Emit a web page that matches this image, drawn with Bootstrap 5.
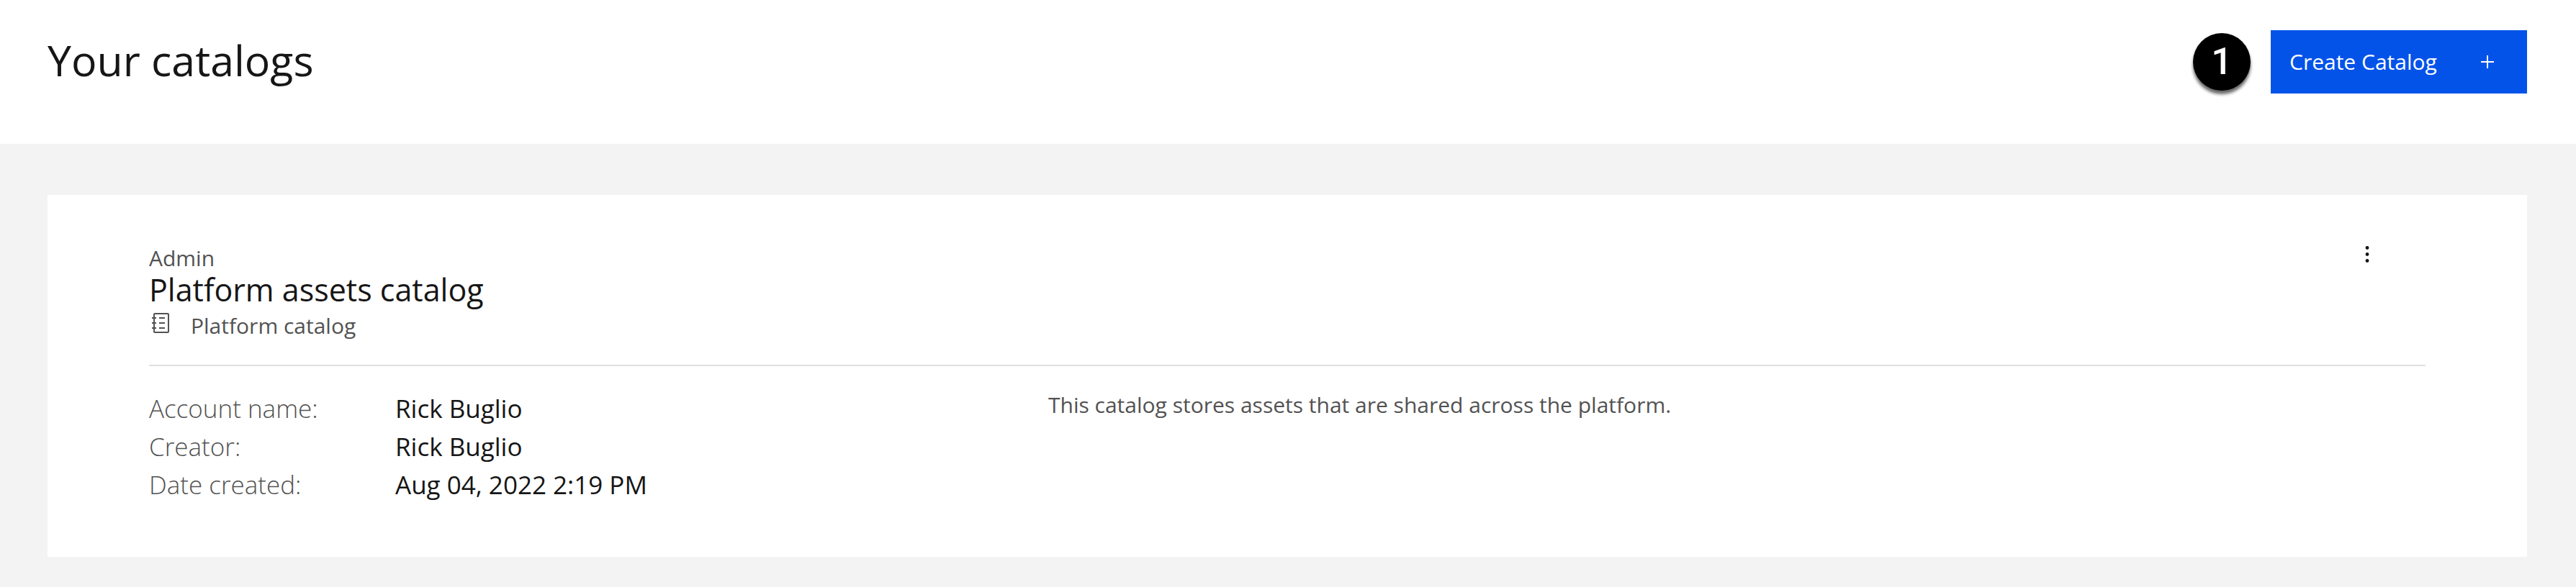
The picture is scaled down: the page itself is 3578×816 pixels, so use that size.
<!DOCTYPE html>
<html lang="en">
<head>
<meta charset="utf-8">
<meta name="viewport" content="width=device-width, initial-scale=1">
<title>Your catalogs</title>
<link href="https://cdn.jsdelivr.net/npm/bootstrap@5.3.0/dist/css/bootstrap.min.css" rel="stylesheet">
<style>
  body { font-family: "Open Sans", "Noto Sans", sans-serif; background: #f3f3f3; color: #161616; }
  .page-head { padding: 42px 68px 70px 66px; }
  .page-title { font-size: 59px; line-height: 82px; }
  .step-marker { width: 80px; height: 80px; border-radius: 50%; background: #000; color: #fff; font: 500 52px/80px Roboto, sans-serif; box-shadow: 0 5px 4px rgba(0, 0, 0, .6); }
  .btn-create { --bs-btn-color: #fff; --bs-btn-bg: #0353e9; --bs-btn-border-color: #0353e9; --bs-btn-hover-color: #fff; --bs-btn-hover-bg: #0043ce; --bs-btn-border-width: 0; width: 356px; height: 88px; padding: 0 46px 0 26px; font-size: 30px; line-height: 44px; }
  .page-body { padding: 71px 68px 42px 66px; }
  .catalog-card { padding: 66px 141px 74px; }
  .role-text, .kind-text, .about-text { font-size: 30px; line-height: 44px; color: #525252; }
  .catalog-name { font-size: 43px; line-height: 44px; }
  .kind-row { margin-top: 6px; }
  .kind-icon { margin: 0 28px 8px 4px; }
  .btn-more { margin-right: 69px; }
  .rule { border-top: 2px solid #e0e0e0; margin-top: 32px; padding-top: 32px; }
  .facts { font-size: 35px; line-height: 53px; flex: 0 0 39.5%; display: grid; grid-template-columns: 342px 1fr; align-content: start; }
  .facts dt { font-weight: 300; color: #525252; }
</style>
</head>
<body>
<header class="page-head bg-white d-flex justify-content-between align-items-start">
  <h1 class="page-title fw-normal mb-0">Your catalogs</h1>
  <div class="d-flex align-items-center gap-4">
    <span class="step-marker text-center me-1">1</span>
    <button type="button" class="btn btn-create rounded-0 d-flex align-items-center justify-content-between">
      Create Catalog
      <svg width="18" height="18" viewBox="0 0 18 18" fill="none" stroke="currentColor" stroke-width="2" aria-hidden="true"><path d="M9 0v18M0 9h18"/></svg>
    </button>
  </div>
</header>
<main class="page-body">
  <article class="catalog-card bg-white">
    <div class="d-flex justify-content-between align-items-start">
      <div>
        <div class="role-text">Admin</div>
        <h2 class="catalog-name fw-normal mb-0">Platform assets catalog</h2>
        <div class="kind-row d-flex align-items-center">
          <svg class="kind-icon" width="26" height="28" viewBox="0 0 26 28" fill="none" stroke="#525252" stroke-width="2" aria-hidden="true"><rect x="3" y="1" width="20" height="26" rx="1"/><path d="M0 7h6M0 14h6M0 21h6M10 7h8M10 14h8M10 21h8"/></svg>
          <span class="kind-text">Platform catalog</span>
        </div>
      </div>
      <button type="button" class="btn btn-more border-0 p-0 d-flex" aria-label="Catalog options">
        <svg width="24" height="32" viewBox="0 0 24 32" fill="#161616" aria-hidden="true"><circle cx="12" cy="7.5" r="2.4"/><circle cx="12" cy="16.5" r="2.4"/><circle cx="12" cy="25.5" r="2.4"/></svg>
      </button>
    </div>
    <div class="rule d-flex">
      <dl class="facts mb-0">
        <dt>Account name:</dt><dd class="mb-0">Rick Buglio</dd>
        <dt>Creator:</dt><dd class="mb-0">Rick Buglio</dd>
        <dt>Date created:</dt><dd class="mb-0">Aug 04, 2022 2:19 PM</dd>
      </dl>
      <p class="about-text mb-0">This catalog stores assets that are shared across the platform.</p>
    </div>
  </article>
</main>
<script src="https://cdn.jsdelivr.net/npm/bootstrap@5.3.0/dist/js/bootstrap.bundle.min.js"></script>
</body>
</html>
